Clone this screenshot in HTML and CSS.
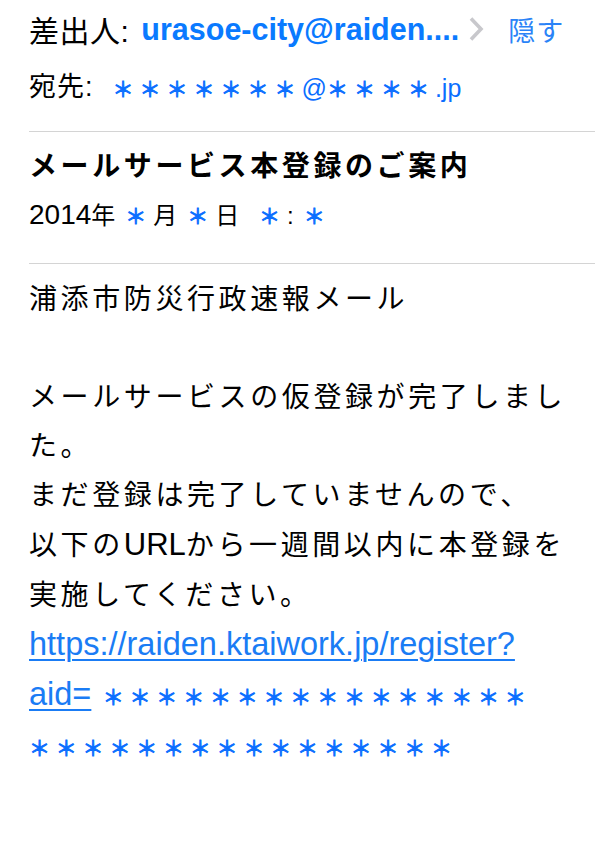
FILE: index.html
```html
<!DOCTYPE html>
<html lang="ja">
<head>
<meta charset="utf-8">
<title>メールサービス本登録のご案内</title>
<link rel="stylesheet" href="styles.css">
</head>
<body>
<div class="mail">
  <header class="meta">
    <div class="row from">
      <span class="label">差出人:</span>
      <span class="sender">urasoe-city@raiden....</span>
      <svg class="chev" width="16" height="26" viewBox="0 0 16 26" aria-hidden="true"><path d="M3 2.5 L13 13 L3 23.5" fill="none" stroke="#c8c8cc" stroke-width="3.6" stroke-linecap="butt" stroke-linejoin="miter"/></svg>
      <span class="hide">隠す</span>
    </div>
    <div class="row to">
      <span class="label small">宛先:</span>
      <span class="addr"><span class="ast">＊＊＊＊＊＊＊</span><span class="lat">@</span><span class="ast">＊＊＊＊</span><span class="lat">.jp</span></span>
    </div>
  </header>
  <section class="subject">
    <h1 class="title">メールサービス本登録のご案内</h1>
    <div class="date"><span class="num">2014</span>年<span class="ast">＊</span>月<span class="ast">＊</span>日 <span class="ast">＊</span>:<span class="ast">＊</span></div>
  </section>
  <section class="content">
    <p class="line">浦添市防災行政速報メール</p>
    <p class="line blank">&nbsp;</p>
    <p class="line">メールサービスの仮登録が完了しまし</p>
    <p class="line">た。</p>
    <p class="line">まだ登録は完了していませんので、</p>
    <p class="line">以下の<span class="lat">URL</span>から一週間以内に本登録を</p>
    <p class="line">実施してください。</p>
    <p class="line"><a class="link" href="#">https://raiden.ktaiwork.jp/register?</a></p>
    <p class="line"><a class="link" href="#">aid=</a> <span class="ast">＊＊＊＊＊＊＊＊＊＊＊＊＊＊＊＊</span></p>
    <p class="line"><span class="ast">＊＊＊＊＊＊＊＊＊＊＊＊＊＊＊＊</span></p>
  </section>
</div>
</body>
</html>
```

FILE: styles.css
```css
html, body {
  margin: 0;
  padding: 0;
  background: #ffffff;
}

body {
  font-family: "Liberation Sans", "Noto Sans CJK JP", sans-serif;
  color: #000000;
}

.mail {
  padding-left: 29px;
}

.meta {
  padding-top: 9px;
  padding-bottom: 27px;
  border-bottom: 1px solid #d4d4d4;
}

.row {
  display: flex;
  align-items: center;
  height: 40px;
  white-space: nowrap;
}

.row.to {
  margin-top: 15px;
}

.label {
  font-size: 30px;
  letter-spacing: 0.5px;
}

.label.small {
  font-size: 27px;
  letter-spacing: 1px;
}

.sender {
  margin-left: 12px;
  font-size: 30.5px;
  font-weight: bold;
  color: #0a7aff;
}

.chev {
  margin-left: 9px;
}

.hide {
  margin-left: 24px;
  font-size: 27px;
  letter-spacing: 1px;
  color: #2a83f7;
}

.addr {
  margin-left: 19px;
  padding-top: 8px;
  color: #0a6eff;
}

.ast {
  font-size: 21px;
  letter-spacing: 6px;
  color: #0a6eff;
  -webkit-text-stroke: 0.9px #0a6eff;
}

.addr .lat {
  font-size: 25px;
}

.subject {
  padding-top: 15px;
  padding-bottom: 28px;
  border-bottom: 1px solid #d4d4d4;
}

.title {
  margin: 0;
  font-size: 28px;
  letter-spacing: 3.6px;
  line-height: 40px;
  font-weight: bold;
}

.date {
  margin-top: 10px;
  font-size: 24px;
  letter-spacing: 3px;
  line-height: 36px;
}

.date .num {
  font-size: 28px;
  letter-spacing: 0;
}

.date .ast {
  margin: 0 7px 0 7px;
  letter-spacing: 0;
}

.content {
  padding-top: 11px;
  padding-right: 20px;
}

.line {
  margin: 0;
  font-size: 28px;
  letter-spacing: 3.6px;
  line-height: 49.1px;
  white-space: nowrap;
}

.line .lat {
  font-size: 31px;
  letter-spacing: 0;
}

.link {
  font-size: 32.5px;
  letter-spacing: 0;
  color: #1a7cf5;
  text-decoration: underline;
  text-decoration-thickness: 2px;
  text-underline-offset: 4px;
}

.line .ast {
  font-size: 21px;
  letter-spacing: 5.8px;
}
```
